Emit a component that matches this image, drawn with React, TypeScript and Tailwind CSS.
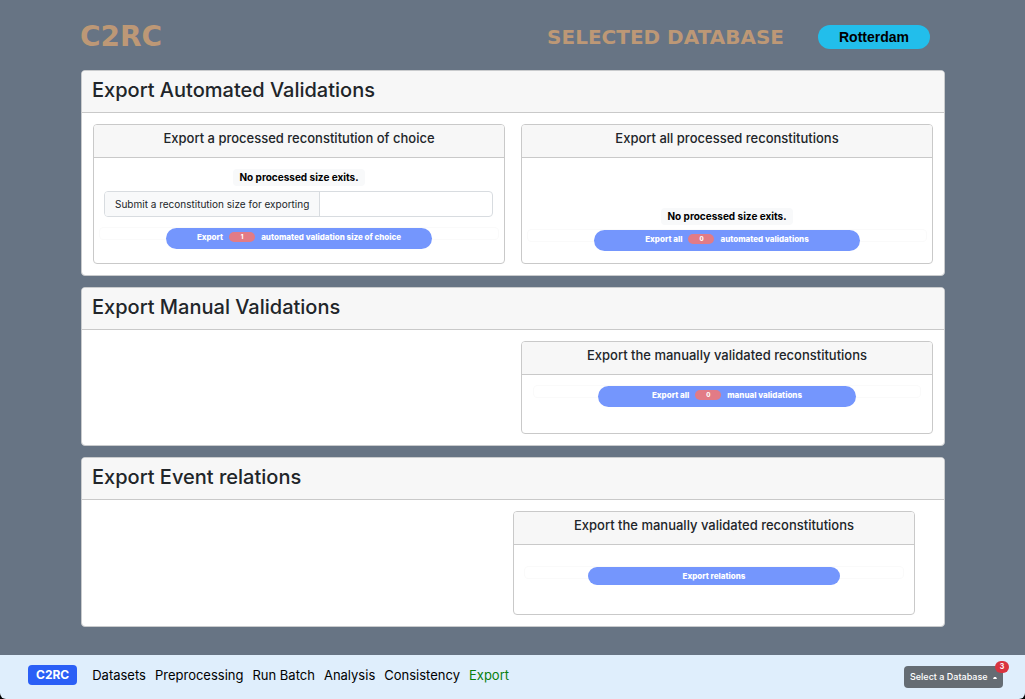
import type { ReactNode } from 'react';

function Section({ title, children }: { title: string; children: ReactNode }) {
  return (
    <section className="overflow-hidden rounded border border-[#c9cbcd] bg-white">
      <h2 className="border-b border-[#c9c9c9] bg-[#f7f7f7] px-2.5 pt-[5px] pb-[7px] text-xl leading-[29px] font-medium">
        {title}
      </h2>
      <div className="p-[11px]">{children}</div>
    </section>
  );
}

function Panel({ title, children }: { title: string; children: ReactNode }) {
  return (
    <div className="flex flex-col overflow-hidden rounded border border-[#c9c9c9] bg-white">
      <h3 className="border-b border-[#c9c9c9] bg-[#f7f7f7] pt-[3px] pb-[9px] text-center text-[13px] leading-5 font-medium">
        {title}
      </h3>
      {children}
    </div>
  );
}

function Notice() {
  return (
    <p className="self-center rounded bg-[#f8f9fa] px-1.5 text-[10px] leading-[17px] font-bold text-black">
      No processed size exits.
    </p>
  );
}

function Count({ value }: { value: number }) {
  return (
    <span className="mx-1.5 w-[26px] rounded-full bg-[#e27b86] text-center text-[6px] leading-[10px]">
      {value}
    </span>
  );
}

function Action({ children, slim = false }: { children: ReactNode; slim?: boolean }) {
  return (
    <div className="flex h-[13px] items-start justify-center rounded border border-[#fafafa]">
      <button
        type="button"
        className={
          slim
            ? 'flex h-[18px] w-2/3 shrink-0 items-center justify-center rounded-full bg-[#7496fd] text-[8px] leading-3 font-extrabold text-white'
            : 'flex h-[21px] w-2/3 shrink-0 items-center justify-center rounded-full bg-[#7496fd] pb-[3px] text-[8px] leading-3 font-extrabold text-white'
        }
      >
        {children}
      </button>
    </div>
  );
}

const links = ['Datasets', 'Preprocessing', 'Run Batch', 'Analysis', 'Consistency', 'Export'];

export default function App() {
  return (
    <div className="flex min-h-screen flex-col bg-[#677484] font-[Inter,'Liberation_Sans',sans-serif] text-[#212529]">
      <header className="flex h-[70px] items-center justify-between pt-1 pr-[95px] pl-20 font-['DejaVu_Sans',sans-serif] font-bold text-[#bd9876]">
        <h1 className="text-[28px] leading-8">C2RC</h1>
        <div className="flex items-center gap-[34px]">
          <span className="text-xl leading-6">SELECTED DATABASE</span>
          <span className="w-28 rounded-full bg-[#22beeb] text-center font-['Liberation_Sans',sans-serif] text-sm leading-6 text-black">
            Rotterdam
          </span>
        </div>
      </header>

      <main className="flex flex-col gap-[11px] pr-20 pb-7 pl-[81px]">
        <Section title="Export Automated Validations">
          <div className="grid grid-cols-2 gap-4">
            <Panel title="Export a processed reconstitution of choice">
              <div className="flex h-[105px] flex-col pt-[11px]">
                <Notice />
                <div className="mr-[11px] ml-2.5 mt-[5px] mb-2.5 flex h-[26px] overflow-hidden rounded border border-[#d8dce0] text-[10px]">
                  <label
                    htmlFor="size"
                    className="flex items-center border-r border-[#d8dce0] bg-[#f8f9fa] px-2.5 whitespace-nowrap"
                  >
                    Submit a reconstitution size for exporting
                  </label>
                  <input id="size" type="text" className="min-w-0 flex-1 px-2 outline-none" />
                </div>
                <div className="px-[5px]">
                  <Action>
                    Export <Count value={1} /> automated validation size of choice
                  </Action>
                </div>
              </div>
            </Panel>
            <Panel title="Export all processed reconstitutions">
              <div className="flex h-[105px] flex-col justify-end px-[5px] pb-[21px]">
                <Notice />
                <div className="mt-1">
                  <Action>
                    Export all <Count value={0} /> automated validations
                  </Action>
                </div>
              </div>
            </Panel>
          </div>
        </Section>

        <Section title="Export Manual Validations">
          <div className="grid grid-cols-2 gap-4">
            <div className="col-start-2">
              <Panel title="Export the manually validated reconstitutions">
                <div className="h-[58px] px-[11px] pt-[10px]">
                  <Action>
                    Export all <Count value={0} /> manual validations
                  </Action>
                </div>
              </Panel>
            </div>
          </div>
        </Section>

        <Section title="Export Event relations">
          <div className="grid grid-cols-2 px-[18px]">
            <div className="col-start-2">
              <Panel title="Export the manually validated reconstitutions">
                <div className="h-[69px] px-2.5 pt-[21px]">
                  <Action slim>Export relations</Action>
                </div>
              </Panel>
            </div>
          </div>
        </Section>
      </main>

      <div className="mt-auto bg-black">
        <footer className="flex h-11 items-center rounded-b-md bg-[#dfeefc] pr-[22px] pb-1 pl-7">
          <a
            href="#home"
            className="mr-[15px] rounded bg-[#2b5ff6] px-2 text-xs leading-5 font-bold text-white"
          >
            C2RC
          </a>
          <nav className="flex gap-[9px] text-[13px] leading-5 text-black">
            {links.map((link) => (
              <a
                key={link}
                href={'#' + link.toLowerCase().replace(' ', '-')}
                className={link === 'Export' ? 'text-[#087f0e]' : ''}
              >
                {link}
              </a>
            ))}
          </nav>
          <div className="relative mt-1 ml-auto">
            <select
              aria-label="Select a Database"
              className="block h-[22px] w-[99px] appearance-none rounded-sm bg-[#656c73] pl-1.5 text-[9px] font-medium text-white"
            >
              <option>Select a Database</option>
            </select>
            <svg
              viewBox="0 0 4 2"
              className="pointer-events-none absolute top-[11px] right-1.5 h-0.5 w-1"
              fill="white"
              aria-hidden="true"
            >
              <path d="M0 2 1 0 3 0 4 2Z" />
            </svg>
            <span className="absolute -top-[5px] -right-1.5 w-3.5 rounded-full bg-[#d9343f] text-center text-[7px] leading-3 font-bold text-white">
              3
            </span>
          </div>
        </footer>
      </div>
    </div>
  );
}
